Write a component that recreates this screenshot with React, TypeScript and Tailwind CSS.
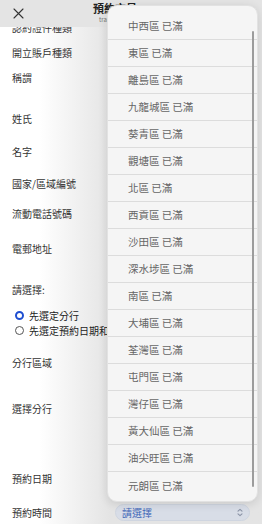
import React from "react";

const font = { fontFamily: '"Noto Sans CJK TC", "Noto Sans", sans-serif' };

const districts = [
  "中西區", "東區", "離島區", "九龍城區", "葵青區", "觀塘區", "北區", "西貢區", "沙田區",
  "深水埗區", "南區", "大埔區", "荃灣區", "屯門區", "灣仔區", "黃大仙區", "油尖旺區", "元朗區",
];

type Row = { text: string; mt: string; kind?: "radio-on" | "radio-off" | "select" };

const rows: Row[] = [
  { text: "認約證件種類", mt: "mt-[-7px]" },
  { text: "開立賬戶種類", mt: "mt-[11px]" },
  { text: "稱謂", mt: "mt-[11px]" },
  { text: "姓氏", mt: "mt-[27px]" },
  { text: "名字", mt: "mt-[19px]" },
  { text: "國家/區域編號", mt: "mt-[18px]" },
  { text: "流動電話號碼", mt: "mt-[16px]" },
  { text: "電郵地址", mt: "mt-[21px]" },
  { text: "請選擇:", mt: "mt-[27px]" },
  { text: "先選定分行", mt: "mt-[12px]", kind: "radio-on" },
  { text: "先選定預約日期和", mt: "mt-[1px]", kind: "radio-off" },
  { text: "分行區域", mt: "mt-[18px]" },
  { text: "選擇分行", mt: "mt-[32px]" },
  { text: "預約日期", mt: "mt-[56px]" },
  { text: "預約時間", mt: "mt-[20px]", kind: "select" },
];

function UpDown() {
  return (
    <svg width="8" height="9" viewBox="0 0 8 9" fill="none" stroke="#8a93a6" strokeWidth="1.1" strokeLinecap="round" strokeLinejoin="round">
      <path d="M2 3.2 L4 1.3 L6 3.2" />
      <path d="M2 5.8 L4 7.7 L6 5.8" />
    </svg>
  );
}

function FormRow({ row }: { row: Row }) {
  if (row.kind === "radio-on" || row.kind === "radio-off") {
    return (
      <div className={`${row.mt} flex items-center h-[14px] pl-[15px] gap-[5px] text-[10px] text-[#222] whitespace-nowrap`}>
        {row.kind === "radio-on" ? (
          <span className="size-[9px] rounded-full border-[2.5px] border-[#1f4fd1] bg-white shrink-0" />
        ) : (
          <span className="size-[9px] rounded-full border border-[#555] bg-white shrink-0" />
        )}
        <span>{row.text}</span>
      </div>
    );
  }
  if (row.kind === "select") {
    return (
      <div className={`${row.mt} flex items-center h-[14px] text-[10px] text-[#333]`}>
        <span className="pl-[12px] w-[115px] shrink-0">{row.text}</span>
        <div className="flex items-center justify-between w-[135px] h-[17px] rounded-full bg-[#d8dde7] border border-[#cfd5e0] pl-[6px] pr-[5px]">
          <span className="text-[10px] text-[#3f67b8]">請選擇</span>
          <UpDown />
        </div>
      </div>
    );
  }
  return (
    <div className={`${row.mt} flex items-center h-[14px] pl-[12px] text-[10px] text-[#333] whitespace-nowrap`}>
      {row.text}
    </div>
  );
}

export default function App() {
  return (
    <div
      style={font}
      className="relative w-[262px] h-[524px] overflow-hidden bg-linear-to-r from-white from-15% via-[#f0f0f0] via-30% to-[#e4e4e4] to-42%"
    >
      <div className="flex items-start h-[27px] bg-[#e4e4e4]">
        <svg className="ml-[13px] mt-[8px]" width="11" height="11" viewBox="0 0 11 11" stroke="#333" strokeWidth="1.1" strokeLinecap="round">
          <path d="M1 1 L10 10 M10 1 L1 10" />
        </svg>
        <div className="ml-[69px] mt-[3px] flex flex-col items-center leading-none">
          <span className="text-[11px] font-bold text-[#222]">預約交易</span>
          <span className="text-[6px] text-[#777] mt-[3px]">transaction</span>
        </div>
      </div>

      <div className="h-[497px] overflow-hidden">
        {rows.map((r) => (
          <FormRow key={r.text} row={r} />
        ))}
      </div>

      <div className="absolute left-[107px] top-[5px] w-[151px] h-[497px] rounded-[10px] bg-[#f5f5f5] border border-[#e2e2e2] shadow-[0_2px_10px_rgba(0,0,0,0.12)] overflow-hidden">
        <div className="pt-[7px]">
          {districts.map((d, i) => (
            <div
              key={d}
              className={`h-[27px] flex items-center pl-[20px] text-[10.5px] text-[#666] ${i < districts.length - 1 ? "border-b border-[#dcdcdc]" : ""}`}
            >
              {d} 已滿
            </div>
          ))}
        </div>
        <div className="absolute right-[3px] top-[25px] bottom-[14px] w-[2px] rounded-full bg-[#9c9c9c]" />
      </div>
    </div>
  );
}
